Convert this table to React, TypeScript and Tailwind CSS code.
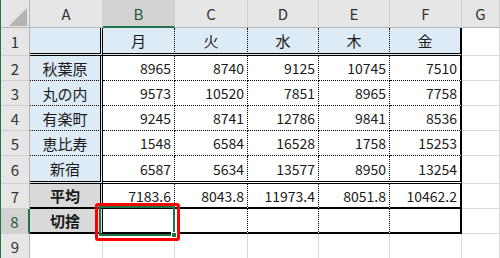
import type { ReactNode } from 'react'

const days = ['月', '火', '水', '木', '金']

// A列の見出し + 月〜金の値
const data: [string, ...(string | number)[]][] = [
  ['秋葉原', 8965, 8740, 9125, 10745, 7510],
  ['丸の内', 9573, 10520, 7851, 8965, 7758],
  ['有楽町', 9245, 8741, 12786, 9841, 8536],
  ['恵比寿', 1548, 6584, 16528, 1758, 15253],
  ['新宿', 6587, 5634, 13577, 8950, 13254],
  ['平均', '7183.6', '8043.8', '11973.4', '8051.8', '10462.2'],
  ['切捨', '', '', '', '', ''],
]

const letters = ['A', 'B', 'C', 'D', 'E', 'F', 'G']

// col: 0=A .. 5=F, 6=G / row: 1..9
function rightBorder(col: number, row: number) {
  if (row === 9 || col === 6) return 'border-r border-r-[#dadada]'
  if (col === 0) return 'border-r-[3px] [border-right-style:double]! border-r-black'
  if (col === 5) return 'border-r-2 border-r-black'
  return 'border-r [border-right-style:dotted]! border-r-black'
}

function bottomBorder(col: number, row: number) {
  if (row === 9 || col === 6) return 'border-b border-b-[#dadada]'
  if (row === 1 || row === 6) return 'border-b-[3px] [border-bottom-style:double]! border-b-black'
  if (row >= 7) return 'border-b-2 border-b-black'
  return 'border-b [border-bottom-style:dotted]! border-b-black'
}

function background(col: number, row: number) {
  if (row > 8 || col === 6) return 'bg-white'
  if (col === 0) return row >= 7 ? 'bg-[#d9d9d9]' : 'bg-[#ddebf7]'
  if (row === 1) return 'bg-[#ddebf7]'
  return 'bg-white'
}

function Cell({ col, row, children }: { col: number; row: number; children?: ReactNode }) {
  const isLabel = col === 0 || row === 1
  return (
    <div
      className={`flex items-center overflow-hidden whitespace-nowrap leading-none text-[#1a1a1a] ${rightBorder(col, row)} ${bottomBorder(col, row)} ${background(col, row)} ${
        isLabel ? 'justify-center text-[15px]' : 'justify-end pr-[3px] text-[14px]'
      } ${row >= 7 && col === 0 ? 'font-bold' : ''}`}
    >
      {children}
    </div>
  )
}

function RowHead({ n }: { n: number }) {
  const active = n === 8
  return (
    <div
      className={`flex items-center justify-center text-[15px] leading-none border-b border-b-[#cfcfcf] ${
        active
          ? 'bg-[#d2d2d2] text-[#1e5a3a] border-r-2 border-r-[#217346]'
          : 'bg-[#e6e6e6] text-[#333] border-r border-r-[#b5b5b5]'
      }`}
    >
      {n}
    </div>
  )
}

export default function App() {
  return (
    <div className="relative h-[258px] w-[500px] overflow-hidden border-l border-l-[#217346] bg-white font-['Noto_Sans_CJK_JP',sans-serif]">
      <div className="grid grid-cols-[29px_73px_72px_73px_71px_71px_72px_38px] grid-rows-[28px_28px_25px_25px_25px_25px_28px_25px_25px_25px]">
        {/* 左上の角 */}
        <div className="relative border-b border-r border-[#b5b5b5] bg-[#e6e6e6]">
          <svg className="absolute left-[8px] top-[8px]" width="18" height="18" viewBox="0 0 18 18">
            <polygon points="18,0 18,18 0,18" fill="#b4b4b4" />
          </svg>
        </div>
        {letters.map((l) => (
          <div
            key={l}
            className={`flex items-center justify-center text-[15px] leading-none border-r border-r-[#d0d0d0] ${
              l === 'B'
                ? 'bg-[#d2d2d2] text-[#1e5a3a] border-b-2 border-b-[#217346]'
                : 'bg-[#e6e6e6] text-[#333] border-b border-b-[#b5b5b5]'
            }`}
          >
            {l}
          </div>
        ))}

        {/* 1行目: 曜日 */}
        <RowHead n={1} />
        <Cell col={0} row={1} />
        {days.map((d, i) => (
          <Cell key={d} col={i + 1} row={1}>
            {d}
          </Cell>
        ))}
        <Cell col={6} row={1} />

        {data.map((r, ri) => {
          const row = ri + 2
          return [
            <RowHead key={`h${row}`} n={row} />,
            ...r.map((v, ci) => (
              <Cell key={`${row}-${ci}`} col={ci} row={row}>
                {v}
              </Cell>
            )),
            <Cell key={`${row}-g`} col={6} row={row} />,
          ]
        })}

        <RowHead n={9} />
        {letters.map((l, i) => (
          <Cell key={`9${l}`} col={i} row={9} />
        ))}
      </div>

      {/* 選択セル B8 */}
      <div className="absolute left-[98px] top-[206px] h-[30px] w-[76px] border-2 border-[#217346]" />
      <div className="absolute left-[170px] top-[232px] h-[6px] w-[6px] border border-white bg-[#217346]" />

      {/* 赤枠 */}
      <div className="absolute left-[94px] top-[203px] h-[38px] w-[85px] rounded-[3px] border-[3px] border-[#ff0000]" />
    </div>
  )
}
